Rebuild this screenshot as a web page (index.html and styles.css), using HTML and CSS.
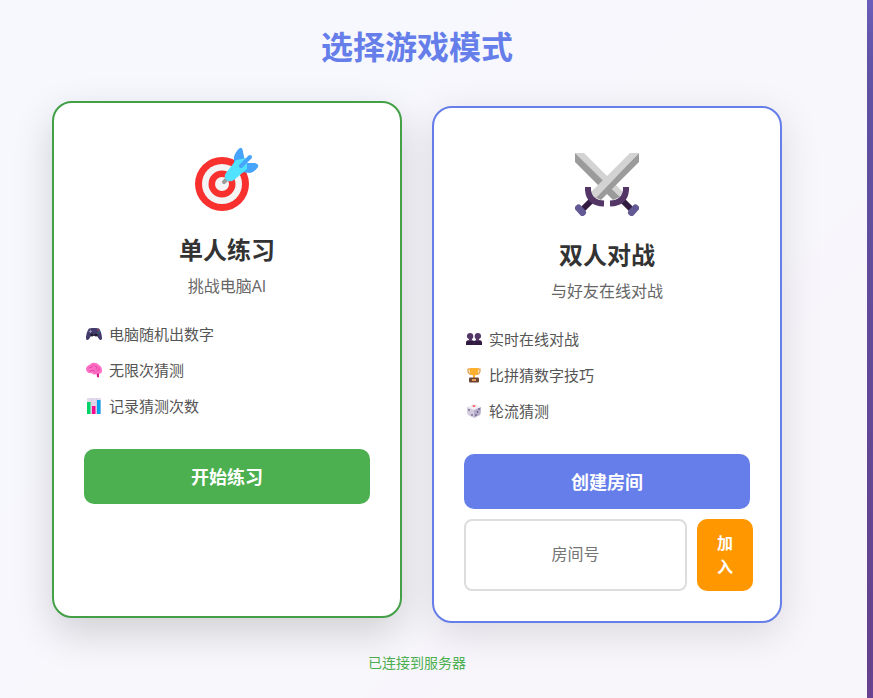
FILE: index.html
```html
<!DOCTYPE html>
<html lang="zh-CN">
<head>
    <meta charset="UTF-8">
    <meta name="viewport" content="width=device-width, initial-scale=1.0">
    <title>选择游戏模式</title>
    <link rel="stylesheet" href="styles.css">
</head>
<body>
    <main class="container">
        <h1>选择游戏模式</h1>

        <div class="mode-cards">
            <section class="mode-card single active">
                <svg class="mode-icon" viewBox="0 0 64 64" aria-hidden="true">
                    <circle cx="27" cy="37" r="27" fill="#f8312f"/>
                    <circle cx="27" cy="37" r="20" fill="#f4f4f4"/>
                    <circle cx="27" cy="37" r="13.5" fill="#f8312f"/>
                    <circle cx="27" cy="37" r="7" fill="#f4f4f4"/>
                    <path d="M29 35L35 29" stroke="#9b9b9b" stroke-width="4" stroke-linecap="round"/>
                    <path d="M39 18V10C40 6 43 2 45 1C47 0 48 3 48 5L50 14L44 22Z" fill="#46a4fb"/>
                    <path d="M46 25L51 16L59 16C62 16 64 18 63 20C61 23 58 25 55 26Z" fill="#46a4fb"/>
                    <path d="M31 26L41 13L52 11L52 22L39 33C33 37 27 31 31 26Z" fill="#50e2ff"/>
                    <path d="M46 19L55 10" stroke="#46a4fb" stroke-width="4" stroke-linecap="round"/>
                </svg>
                <h2>单人练习</h2>
                <p class="subtitle">挑战电脑AI</p>
                <ul class="features">
                    <li>
                        <svg viewBox="0 0 16 16" aria-hidden="true">
                            <path d="M3 2.5L6 2H10L13 2.5C14.5 4 16 9 16 12C16 14.5 14 14.5 13 13L11 10H5L3 13C2 14.5 0 14.5 0 12C0 9 1.5 4 3 2.5Z" fill="#433b6b"/>
                            <path d="M4.4 3.7V7M2.8 5.4H6" stroke="#998eae" stroke-width="1"/>
                            <circle cx="6" cy="9" r="1.5" fill="#1c1c2b"/>
                            <circle cx="10" cy="9" r="1.5" fill="#1c1c2b"/>
                            <circle cx="12" cy="4" r=".8" fill="#ca3b45"/>
                            <circle cx="13.5" cy="5.5" r=".8" fill="#38739b"/>
                            <circle cx="12" cy="7" r=".8" fill="#3f805b"/>
                        </svg>
                        电脑随机出数字
                    </li>
                    <li>
                        <svg viewBox="0 0 16 16" aria-hidden="true">
                            <path d="M10.5 11L11 15L13 15.5V11Z" fill="#d9168e"/>
                            <path d="M0 7C0 5 2 3 4 2.5C6 0 11 .5 13 3C15 4 16 6 16 9C16 11 14 12.5 12 11.5C9 13 7 13 6 11C3 12 0 10 0 7Z" fill="#ff6fc4"/>
                            <path d="M3 6L6 5L7 3M9 4L11 5L10 7M4 9L7 8L9 10M11 9L13 8L13 6" fill="none" stroke="#dd3aa0" stroke-width=".8" stroke-linecap="round"/>
                        </svg>
                        无限次猜测
                    </li>
                    <li>
                        <svg viewBox="0 0 16 16" aria-hidden="true">
                            <rect x="1" width="14" height="16" rx="1" fill="#e1d8ec"/>
                            <path d="M5.5 0V16M10.5 0V16M1 5H15M1 10H15" stroke="#cdc4d6" stroke-width=".5"/>
                            <rect x="1" y="4" width="3.5" height="12" fill="#00d26a"/>
                            <rect x="6" y="8" width="3.5" height="8" fill="#f70a8d"/>
                            <rect x="11" y="2" width="3.5" height="14" fill="#00a6ed"/>
                        </svg>
                        记录猜测次数
                    </li>
                </ul>
                <button type="button" class="btn btn-green">开始练习</button>
            </section>

            <section class="mode-card double">
                <svg class="mode-icon" viewBox="0 0 64 64" aria-hidden="true">
                    <path d="M0 1H9L49 41L45 45Z" fill="#d3d3d3"/>
                    <path d="M0 1V10L38 48L45 45Z" fill="#9b9b9b"/>
                    <path d="M64 1V10L26 48L19 45Z" fill="#9b9b9b"/>
                    <path d="M64 1H55L15 41L21 46Z" fill="#d3d3d3"/>
                    <path d="M16 49L8 57M48 49L56 57" stroke="#321b41" stroke-width="6"/>
                    <path d="M13 35V38Q14 51 29 51.5M51 35V38Q50 51 35 51.5" fill="none" stroke="#533566" stroke-width="6"/>
                    <path d="M3.5 56L7.5 60.5M60.5 56L56.5 60.5" stroke="#635994" stroke-width="7" stroke-linecap="round"/>
                </svg>
                <h2>双人对战</h2>
                <p class="subtitle">与好友在线对战</p>
                <ul class="features">
                    <li>
                        <svg viewBox="0 0 16 16" aria-hidden="true">
                            <path d="M0 14V12C0 10 1 9 3 9L3 8C0 7 0 2 4.3 2C8 2 8 7 6 8V9L8 10L10 9V8C8 7 8 2 11.7 2C16 2 16 7 13 8V9C15 9 16 10 16 12V14Z" fill="#533566"/>
                            <path d="M0 14V12Q0 10 2 10H14Q16 10 16 12V14Z" fill="#321b41"/>
                            <path d="M8 11V14" stroke="#533566" stroke-width=".6"/>
                        </svg>
                        实时在线对战
                    </li>
                    <li>
                        <svg viewBox="0 0 16 16" aria-hidden="true">
                            <path d="M4 2H2V4Q2 7 6 7.5M12 2H14V4Q14 7 10 7.5" fill="none" stroke="#e19747" stroke-width="1.2"/>
                            <path d="M3.5 1H12.5V4Q12 8 9 8.5V11H7V8.5Q4 8 3.5 4Z" fill="#ffb02e"/>
                            <rect x="3" y="10.5" width="10" height="5" rx="1" fill="#6d4534"/>
                            <rect x="6" y="12" width="4" height="2" fill="#e39d54"/>
                        </svg>
                        比拼猜数字技巧
                    </li>
                    <li>
                        <svg viewBox="0 0 16 16" aria-hidden="true">
                            <path d="M1 4L8 1L15 4L8 7Z" fill="#f1eef5"/>
                            <path d="M1 4L8 7V15L2 12Q1 11 1 4Z" fill="#d3cadd"/>
                            <path d="M15 4L8 7V15L14 12Q15 11 15 4Z" fill="#b9aeca"/>
                            <ellipse cx="8" cy="3" rx="1.6" ry=".8" fill="#f8312f"/>
                            <g fill="#433b6b">
                                <circle cx="3" cy="7" r=".8"/><circle cx="6" cy="12" r=".8"/>
                                <circle cx="13" cy="6" r=".8"/><circle cx="11.5" cy="9" r=".8"/><circle cx="10" cy="12" r=".8"/>
                            </g>
                        </svg>
                        轮流猜测
                    </li>
                </ul>
                <button type="button" class="btn btn-blue">创建房间</button>
                <form class="join-row">
                    <input type="text" class="room-input" placeholder="房间号" aria-label="房间号">
                    <button type="button" class="btn-join">加入</button>
                </form>
            </section>
        </div>

        <p class="status">已连接到服务器</p>
    </main>
</body>
</html>
```
FILE: styles.css
```css
* {
    margin: 0;
    padding: 0;
    box-sizing: border-box;
}

body {
    font-family: "Open Sans", "Noto Sans CJK SC", sans-serif;
    font-size: 16px;
    line-height: 24px;
    color: #333;
    min-height: 100vh;
    background: linear-gradient(135deg, #667eea 0%, #764ba2 100%);
}

.container {
    min-height: 100vh;
    margin-right: 6px;
    padding: 23px 85px 23px 52px;
    background: rgba(255, 255, 255, 0.95);
    box-shadow: 0 20px 60px rgba(0, 0, 0, 0.3);
}

h1 {
    font-size: 32px;
    line-height: 48px;
    text-align: center;
    color: #667eea;
    margin-bottom: 35px;
}

.mode-cards {
    display: grid;
    grid-template-columns: repeat(2, minmax(0, 1fr));
    gap: 30px;
}

.mode-card {
    display: flex;
    flex-direction: column;
    padding: 30px;
    background: #fff;
    border: 2px solid #667eea;
    border-radius: 20px;
    box-shadow: 0 10px 40px rgba(0, 0, 0, 0.12);
    text-align: center;
}

.mode-card.single {
    border-color: #43a047;
}

.mode-card.active {
    transform: translateY(-5px);
    box-shadow: 0 15px 40px rgba(0, 0, 0, 0.16);
}

.mode-icon {
    width: 64px;
    height: 64px;
    margin: 14px auto 21px;
}

h2 {
    font-size: 24px;
    line-height: 36px;
    margin-bottom: 6px;
}

.subtitle {
    color: #666;
}

.features {
    list-style: none;
    margin: 18px 0 25px;
    font-size: 15px;
    line-height: 36px;
    color: #555;
}

.features li {
    display: flex;
    align-items: center;
    gap: 7px;
    padding-left: 2px;
}

.features svg {
    width: 16px;
    height: 16px;
}

.btn,
.btn-join {
    border: none;
    border-radius: 10px;
    color: #fff;
    font-family: inherit;
    font-weight: bold;
    cursor: pointer;
}

.btn {
    width: 100%;
    height: 55px;
    padding-bottom: 2px;
    font-size: 18px;
}

.btn-green {
    background: #4caf50;
}

.btn-blue {
    background: #667eea;
}

.join-row {
    display: flex;
    gap: 10px;
    margin-top: 10px;
}

.room-input {
    flex: 1 0 223px;
    padding-bottom: 2px;
    border: 2px solid #ddd;
    border-radius: 8px;
    font-family: inherit;
    font-size: 16px;
    text-align: center;
}

.room-input::placeholder {
    color: #757575;
}

.btn-join {
    padding: 12px 20px;
    background: #ff9800;
    font-size: 16px;
    line-height: 24px;
}

.status {
    margin-top: 28px;
    font-size: 14px;
    text-align: center;
    color: #4caf50;
}
```
